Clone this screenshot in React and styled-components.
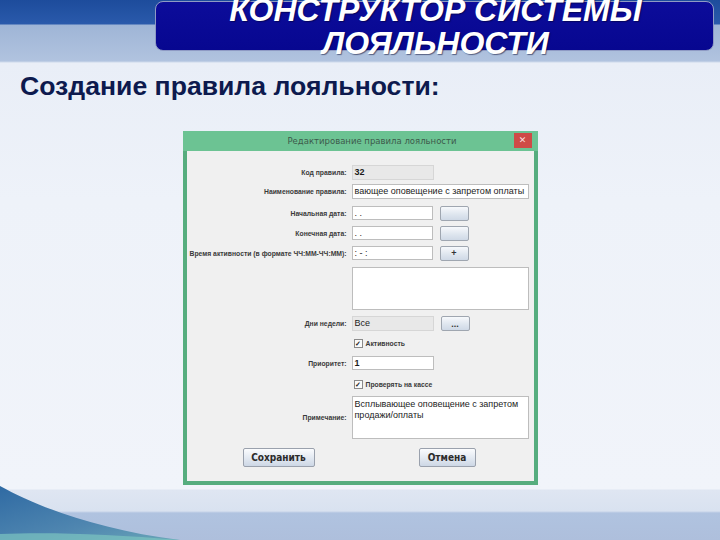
import React from "react";
import styled, { createGlobalStyle } from "styled-components";

const Global = createGlobalStyle`
  html, body { margin: 0; padding: 0; }
  body { width: 720px; height: 540px; overflow: hidden; font-family: "Liberation Sans", Arial, sans-serif; }
`;

const Slide = styled.div`
  position: relative;
  width: 720px;
  height: 540px;
  overflow: hidden;
  display: flex;
  flex-direction: column;
  background:
    linear-gradient(180deg, #1d4c9c 0px, #2a5aab 24px, #9fb5d6 25px, #b1c3df 61px, #e9eef7 63px, #eef2f9 200px, #f1f4fa 489px, #dfe6f2 490px, #d9e2f0 511px, #b0c3e0 513px, #aebfdc 540px);
`;

const Header = styled.div`
  display: flex;
  padding: 1px 6px 0 155px;
  height: 50px;
`;

const TitleBox = styled.div`
  flex: 1;
  height: 48px;
  border-radius: 8px;
  border: 1px solid #8e9ac4;
  background: linear-gradient(180deg, #0c0c9a 0%, #070790 100%);
  display: flex;
  justify-content: center;
`;

const TitleText = styled.div`
  margin-top: -8px;
  padding-left: 2px;
  color: #ffffff;
  font-family: "Liberation Sans", Arial, sans-serif;
  font-weight: bold;
  font-style: italic;
  font-size: 32px;
  line-height: 33px;
  text-align: center;
  text-shadow: 1px 1px 1px rgba(0, 0, 40, 0.5);
  white-space: nowrap;
`;

const Heading = styled.h1`
  margin: 20px 0 0 20px;
  font-family: "Liberation Sans", Arial, sans-serif;
  font-weight: bold;
  font-size: 26.6px;
  line-height: 30px;
  color: #0d1a4e;
`;

const Swoosh = styled.svg`
  position: absolute;
  left: 0;
  bottom: 0;
  width: 180px;
  height: 62px;
`;

const Dialog = styled.div`
  margin: 30px auto 0;
  width: 347px;
  height: 350px;
  border: 4px solid #56ad7e;
  border-top: 0;
  background: #f0f0f0;
  display: flex;
  flex-direction: column;
`;

const TitleBar = styled.div`
  position: relative;
  height: 20px;
  margin: 0 -4px;
  padding-left: 24px;
  background: #6cc393;
  display: flex;
  align-items: center;
  justify-content: center;
  font-family: "DejaVu Sans", sans-serif;
  font-size: 8.5px;
  color: #3d5a4b;
`;

const CloseBtn = styled.div`
  position: absolute;
  right: 6px;
  top: 2px;
  width: 18px;
  height: 15px;
  background: #cf4a47;
  color: #fbdede;
  font-size: 9px;
  line-height: 15px;
  text-align: center;
`;

const Form = styled.div`
  display: flex;
  flex-direction: column;
  padding-top: 14px;
`;

const Row = styled.div`
  display: flex;
  align-items: center;
  margin-top: ${p => p.gap || 0}px;
  height: ${p => p.h || 15}px;
`;

const Label = styled.div`
  width: 165px;
  flex-shrink: 0;
  padding-right: 5px;
  box-sizing: border-box;
  text-align: right;
  font-family: "Liberation Sans", Arial, sans-serif;
  font-weight: bold;
  font-size: 6.8px;
  color: #3a3a3a;
  white-space: nowrap;
`;

const Field = styled.div`
  box-sizing: border-box;
  flex-shrink: 0;
  width: ${p => p.w}px;
  height: ${p => p.h || 15}px;
  background: ${p => (p.disabled ? "#e8e8e8" : "#ffffff")};
  border: 1px solid ${p => (p.disabled ? "#d6d6d6" : "#bdbdbd")};
  padding: ${p => (p.multi ? "2px 2px" : "0 2px")};
  display: flex;
  align-items: ${p => (p.multi ? "flex-start" : "center")};
  overflow: hidden;
  white-space: ${p => (p.multi ? "normal" : "nowrap")};
  font-family: "Liberation Sans", Arial, sans-serif;
  font-size: 9px;
  line-height: 11px;
  font-weight: ${p => (p.bold ? "bold" : "normal")};
  color: #1c1c1c;
`;

const SmallBtn = styled.div`
  box-sizing: border-box;
  margin-left: 7px;
  width: 29px;
  height: 15px;
  border: 1px solid #9fa6b0;
  border-radius: 2px;
  background: linear-gradient(180deg, #f7f9fc 0%, #dfe6ef 55%, #cfd9e6 100%);
  display: flex;
  align-items: center;
  justify-content: center;
  font-family: "Liberation Sans", Arial, sans-serif;
  font-weight: bold;
  font-size: 9px;
  color: #333;
`;

const Check = styled.div`
  margin-left: 167px;
  display: flex;
  align-items: center;
  gap: 3px;
  font-family: "Liberation Sans", Arial, sans-serif;
  font-weight: bold;
  font-size: 6.8px;
  color: #3a3a3a;
`;

const Box = styled.div`
  box-sizing: border-box;
  width: 9px;
  height: 9px;
  border: 1px solid #8a8a8a;
  background: #fafafa;
  font-size: 7px;
  line-height: 7px;
  text-align: center;
  color: #222;
`;

const Buttons = styled.div`
  display: flex;
  margin-top: 9px;
  padding-left: 56px;
`;

const MainBtn = styled.div`
  box-sizing: border-box;
  width: ${p => p.w}px;
  height: 19px;
  margin-right: ${p => p.mr || 0}px;
  border: 1px solid #9aa1ad;
  border-radius: 2px;
  background: linear-gradient(180deg, #fbfcfe 0%, #e4eaf2 50%, #cdd7e5 100%);
  display: flex;
  align-items: center;
  justify-content: center;
  font-family: "DejaVu Sans Condensed", "DejaVu Sans", sans-serif;
  font-weight: bold;
  font-size: 10px;
  color: #2c2c2c;
`;

export default function App() {
  return (
    <>
      <Global />
      <Slide>
        <Header>
          <TitleBox>
            <TitleText>
              КОНСТРУКТОР СИСТЕМЫ
              <br />
              ЛОЯЛЬНОСТИ
            </TitleText>
          </TitleBox>
        </Header>
        <Heading>Создание правила лояльности:</Heading>
        <Dialog>
          <TitleBar>
            Редактирование правила лояльности
            <CloseBtn>✕</CloseBtn>
          </TitleBar>
          <Form>
            <Row>
              <Label>Код правила:</Label>
              <Field w={82} disabled bold>32</Field>
            </Row>
            <Row gap={4}>
              <Label>Наименование правила:</Label>
              <Field w={177}>вающее оповещение с запретом оплаты</Field>
            </Row>
            <Row gap={7} h={14}>
              <Label>Начальная дата:</Label>
              <Field w={81} h={14}>. .</Field>
              <SmallBtn />
            </Row>
            <Row gap={6} h={14}>
              <Label>Конечная дата:</Label>
              <Field w={81} h={14}>. .</Field>
              <SmallBtn />
            </Row>
            <Row gap={6} h={14}>
              <Label>Время активности (в формате ЧЧ:ММ-ЧЧ:ММ):</Label>
              <Field w={81} h={14}>: - :</Field>
              <SmallBtn>+</SmallBtn>
            </Row>
            <Row gap={7} h={43}>
              <Label />
              <Field w={177} h={43} multi />
            </Row>
            <Row gap={6}>
              <Label>Дни недели:</Label>
              <Field w={82} disabled>Все</Field>
              <SmallBtn>...</SmallBtn>
            </Row>
            <Row gap={7} h={10}>
              <Check>
                <Box>✓</Box>
                Активность
              </Check>
            </Row>
            <Row gap={8} h={14}>
              <Label>Приоритет:</Label>
              <Field w={82} h={14} bold>1</Field>
            </Row>
            <Row gap={9} h={10}>
              <Check>
                <Box>✓</Box>
                Проверять на кассе
              </Check>
            </Row>
            <Row gap={7} h={43}>
              <Label>Примечание:</Label>
              <Field w={177} h={43} multi>
                Всплывающее оповещение с запретом продажи/оплаты
              </Field>
            </Row>
            <Buttons>
              <MainBtn w={72} mr={104}>Сохранить</MainBtn>
              <MainBtn w={57}>Отмена</MainBtn>
            </Buttons>
          </Form>
        </Dialog>
        <Swoosh viewBox="0 0 180 62" preserveAspectRatio="none">
          <defs>
            <linearGradient id="sw" x1="0" y1="0" x2="1" y2="1">
              <stop offset="0" stopColor="#2f6aa3" />
              <stop offset="0.6" stopColor="#4f86b0" />
              <stop offset="1" stopColor="#6aa7b8" />
            </linearGradient>
          </defs>
          <path d="M0 8 C40 30 100 52 180 62 L0 62 Z" fill="url(#sw)" />
          <path d="M0 56 C50 54 110 56 180 62 L0 62 Z" fill="#7cc4c0" opacity="0.7" />
        </Swoosh>
      </Slide>
    </>
  );
}
